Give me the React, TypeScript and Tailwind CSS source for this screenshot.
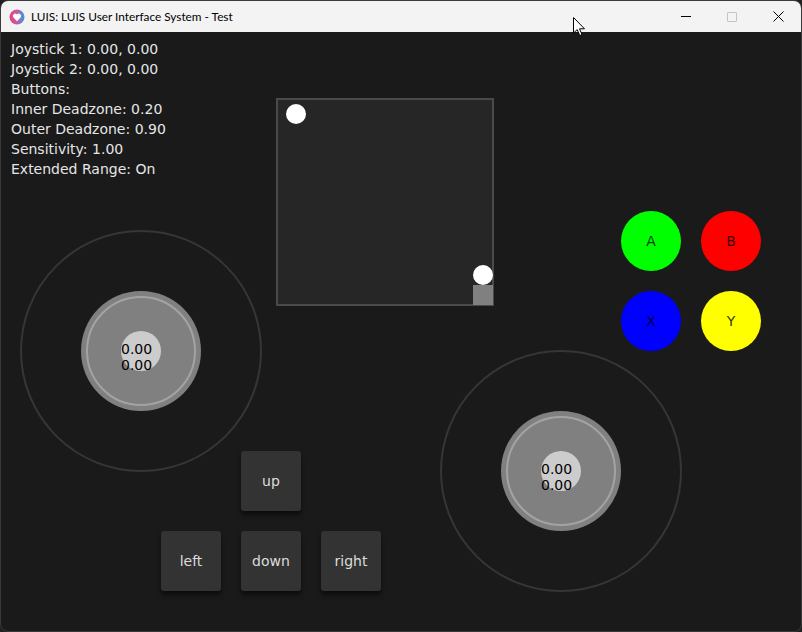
import React from "react";

const stats = [
  "Joystick 1: 0.00, 0.00",
  "Joystick 2: 0.00, 0.00",
  "Buttons:",
  "Inner Deadzone: 0.20",
  "Outer Deadzone: 0.90",
  "Sensitivity: 1.00",
  "Extended Range: On",
];

const faceButtons = [
  { label: "A", color: "bg-[#00ff00]" },
  { label: "B", color: "bg-[#ff0000]" },
  { label: "X", color: "bg-[#0000ff]" },
  { label: "Y", color: "bg-[#ffff00]" },
];

function AppIcon() {
  return (
    <svg width="16" height="16" viewBox="0 0 16 16">
      <defs>
        <linearGradient id="luis" x1="0" y1="0" x2="1" y2="0">
          <stop offset="0" stopColor="#e8407f" />
          <stop offset="0.5" stopColor="#c85aa8" />
          <stop offset="1" stopColor="#2b9fd8" />
        </linearGradient>
      </defs>
      <circle cx="8" cy="8" r="7.5" fill="url(#luis)" />
      <path d="M8 12.2 L4.4 8.6 A2.1 2.1 0 0 1 8 5.6 A2.1 2.1 0 0 1 11.6 8.6 Z" fill="#fff" />
    </svg>
  );
}

function Cursor() {
  return (
    <svg width="13" height="20" viewBox="0 0 13 20" className="absolute left-[572px] top-[16px]">
      <path d="M0.5 0.5 L0.5 16 L4.2 12.6 L6.8 18.6 L9 17.6 L6.5 11.8 L11.5 11.8 Z" fill="#fff" stroke="#000" strokeWidth="1" strokeLinejoin="round" />
    </svg>
  );
}

function Joystick({ x, y }: { x: number; y: number }) {
  return (
    <div
      className="absolute w-[242px] h-[242px] rounded-full border-2 border-[#363636] flex items-center justify-center"
      style={{ left: x - 121, top: y - 121 }}
    >
      <div className="relative w-[120px] h-[120px] rounded-full bg-[#808080] flex items-center justify-center">
        <div className="w-[110px] h-[110px] rounded-full border-2 border-[#a3a3a3]" />
        <div className="absolute inset-0 flex items-center justify-center">
          <div className="w-[40px] h-[40px] rounded-full bg-[#cccccc] flex items-start pt-[10px]">
            <div className="text-[14px] leading-[16px] text-black whitespace-nowrap">
              0.00
              <br />
              0.00
            </div>
          </div>
        </div>
      </div>
    </div>
  );
}

function DpadButton({ label, className = "" }: { label: string; className?: string }) {
  return (
    <div
      className={`w-[60px] h-[60px] rounded-[3px] bg-[#333333] flex items-center justify-center text-[14px] text-[#dcdcdc] shadow-[0_4px_5px_rgba(0,0,0,0.55)] ${className}`}
    >
      {label}
    </div>
  );
}

export default function App() {
  return (
    <div className="w-[802px] h-[632px] bg-[#202020]">
      <div className="relative w-[802px] h-[632px] rounded-[8px] overflow-hidden border border-[#3a3a3a] bg-[#1a1a1a]">
        {/* title bar */}
        <div className="h-[31px] bg-[#f3f3f3] flex items-center" style={{ fontFamily: 'Lato, "Noto Sans", sans-serif' }}>
          <div className="ml-[8px] mt-[1px]">
            <AppIcon />
          </div>
          <span className="ml-[6px] text-[11.8px] text-black">LUIS: LUIS User Interface System - Test</span>
          <div className="ml-auto flex h-full">
            <div className="w-[46px] flex items-center justify-center">
              <div className="w-[10px] h-px bg-black" />
            </div>
            <div className="w-[46px] flex items-center justify-center">
              <div className="w-[10px] h-[10px] border border-[#c4c4c4] rounded-[1px]" />
            </div>
            <div className="w-[46px] flex items-center justify-center">
              <svg width="11" height="11" viewBox="0 0 11 11">
                <path d="M0.5 0.5 L10.5 10.5 M10.5 0.5 L0.5 10.5" stroke="#000" strokeWidth="1" />
              </svg>
            </div>
          </div>
        </div>

        {/* canvas */}
        <div className="relative h-[600px]" style={{ fontFamily: '"DejaVu Sans", sans-serif' }}>
          <div className="pt-[7px] pl-[10px] text-[14px] leading-[20px] text-[#e6e6e6]">
            {stats.map((s) => (
              <div key={s}>{s}</div>
            ))}
          </div>

          {/* touch pad */}
          <div className="absolute left-[275px] top-[66px] w-[218px] h-[208px] border-2 border-[#4a4a4a] bg-[#262626] flex flex-col justify-between">
            <div className="ml-[8px] mt-[4px] w-[20px] h-[20px] rounded-full bg-white" />
            <div className="self-end flex flex-col translate-x-px translate-y-px">
              <div className="w-[20px] h-[20px] rounded-full bg-white" />
              <div className="w-[20px] h-[20px] bg-[#808080]" />
            </div>
          </div>

          <Joystick x={140} y={319} />
          <Joystick x={560} y={439} />

          {/* face buttons */}
          <div className="absolute left-[620px] top-[179px] grid grid-cols-2 gap-[20px]">
            {faceButtons.map((b) => (
              <div
                key={b.label}
                className={`w-[60px] h-[60px] rounded-full flex items-center justify-center text-[14px] text-black/80 ${b.color}`}
              >
                {b.label}
              </div>
            ))}
          </div>

          {/* d-pad */}
          <div className="absolute left-[160px] top-[419px] grid grid-cols-[60px_60px_60px] gap-[20px]">
            <DpadButton label="up" className="col-start-2" />
            <DpadButton label="left" className="col-start-1" />
            <DpadButton label="down" />
            <DpadButton label="right" />
          </div>
        </div>

        <Cursor />
      </div>
    </div>
  );
}
